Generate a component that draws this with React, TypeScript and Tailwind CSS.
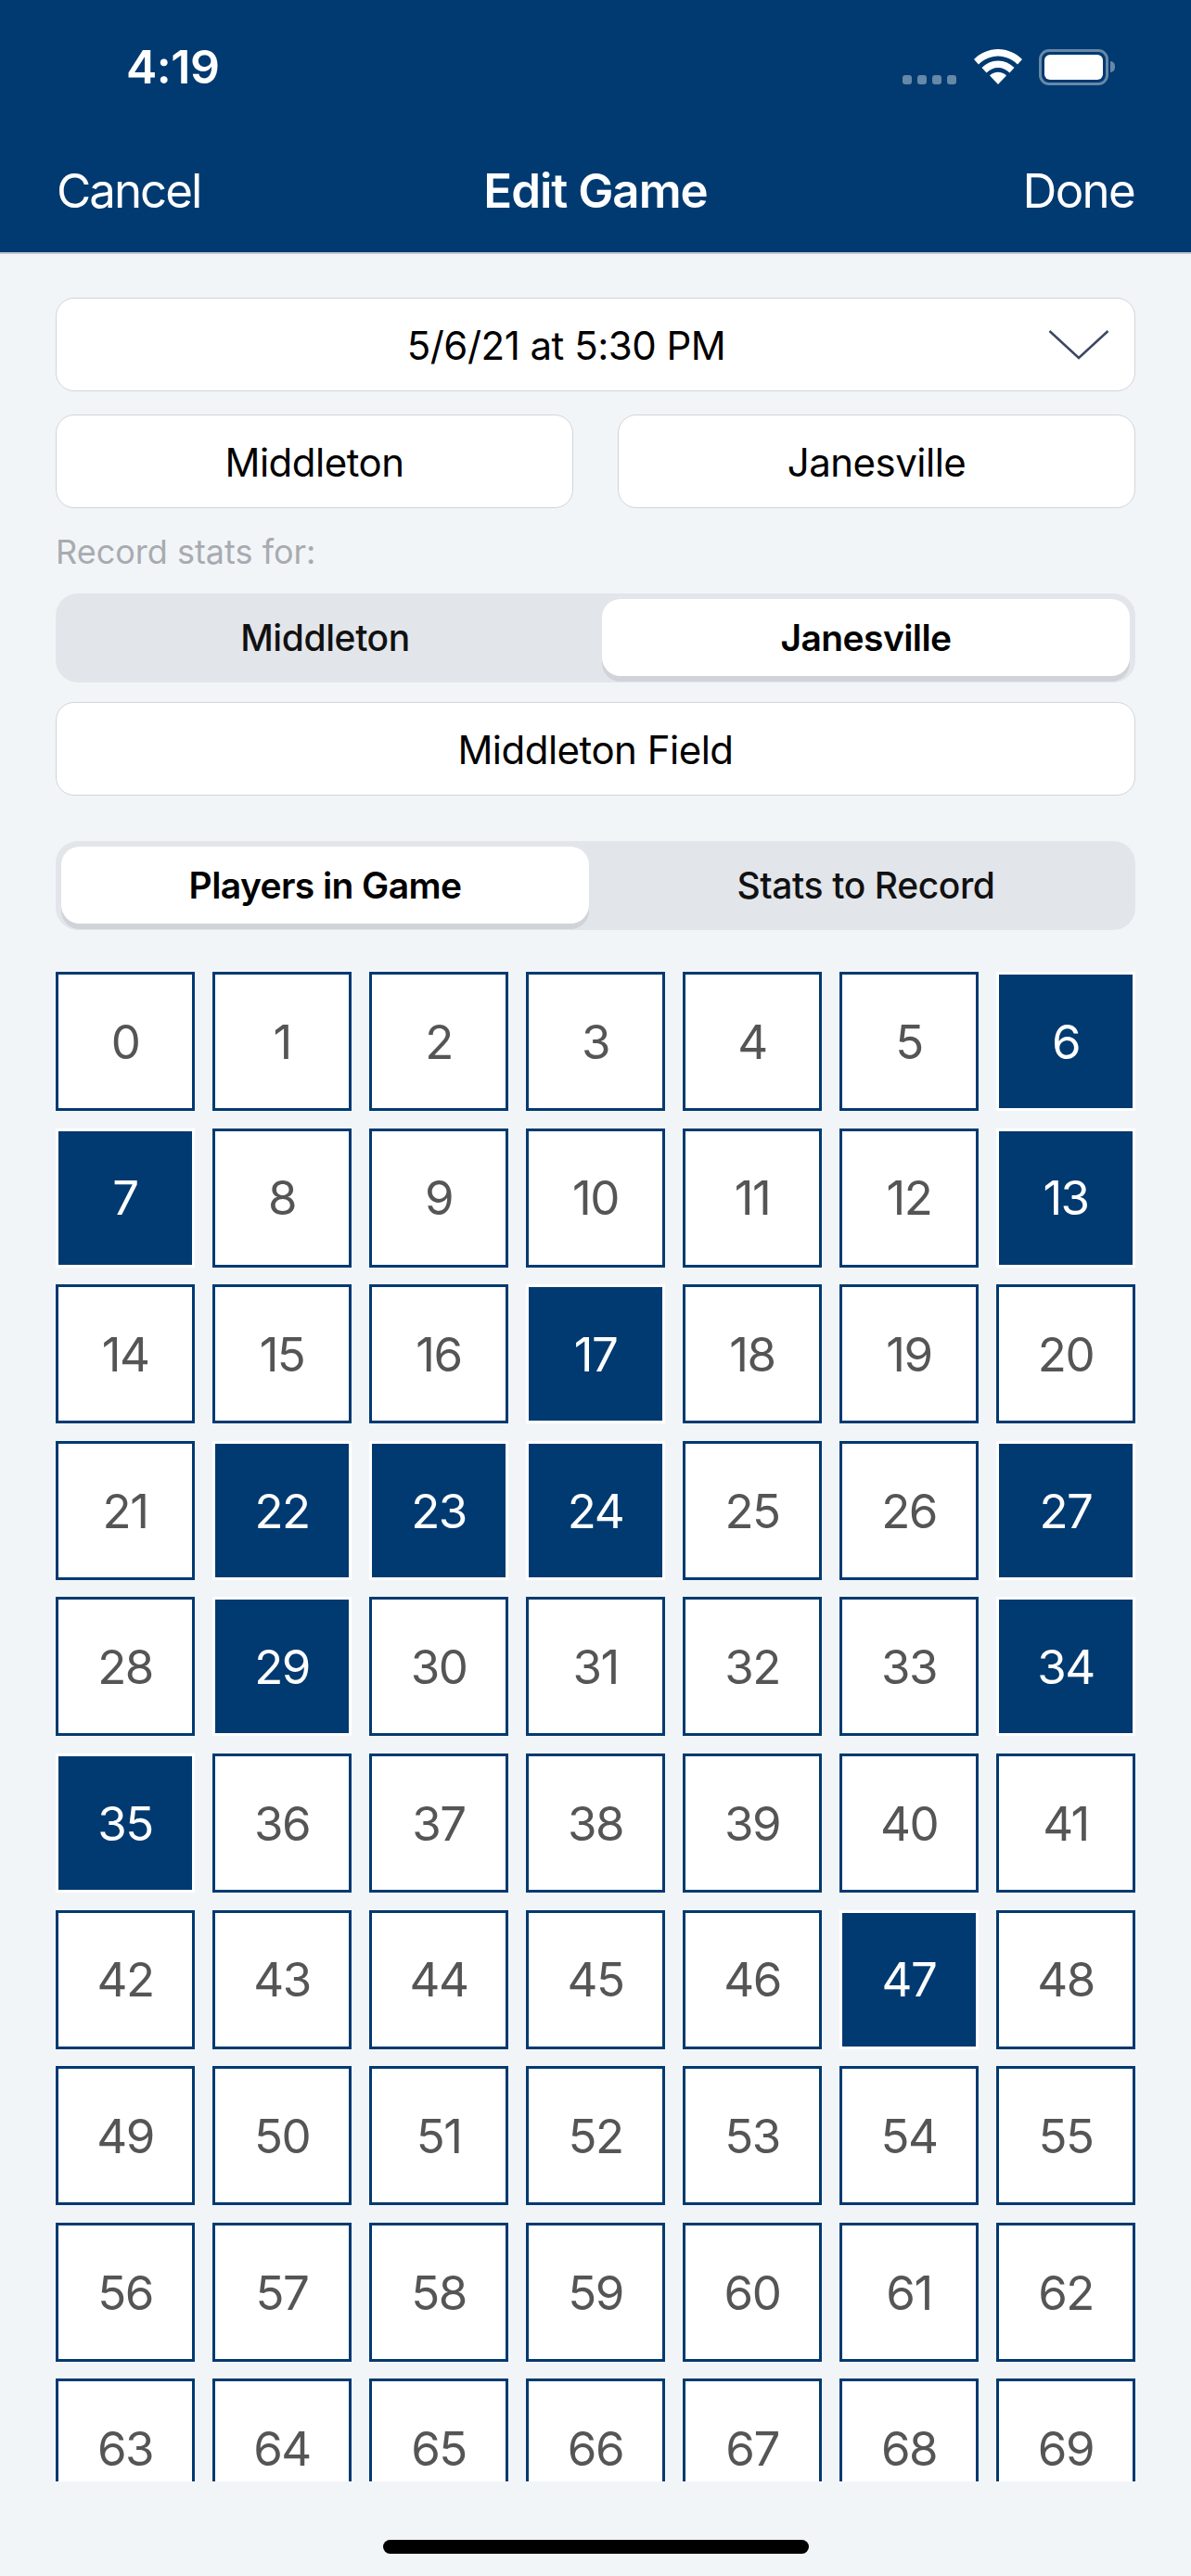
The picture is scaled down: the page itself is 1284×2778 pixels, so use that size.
const navy = "bg-[#003a70]";
const selected = [6, 7, 13, 17, 22, 23, 24, 27, 29, 34, 35, 47];
const numbers = Array.from({ length: 70 }, (_, i) => i);

function StatusIcons() {
  return (
    <div className="flex items-center">
      <div className="mt-[27px] flex gap-[6px]">
        {[0, 1, 2, 3].map((d) => (
          <div key={d} className="h-[10px] w-[10px] rounded-[3px] bg-white/40" />
        ))}
      </div>
      <svg className="ml-[19px]" width="52" height="38" viewBox="0 0 52 38">
        <path d="M26 38 L17 28.5 C22 23.5 30 23.5 35 28.5 Z" fill="#fff" />
        <path d="M26 12.5 C33 12.5 39 15.5 43.5 20 L38.5 25.5 C35 22 30.5 20 26 20 C21.500 20 17 22 13.500 25.500 L8.500 20 C13 15.500 19 12.500 26 12.500 Z" fill="#fff" />
        <path d="M26 0 C36 0 45 4 52 11 L47 16.500 C41.500 11 34 7.500 26 7.500 C18 7.500 10.500 11 5 16.500 L0 11 C7 4 16 0 26 0 Z" fill="#fff" />
      </svg>
      <div className="ml-[18px] flex items-center">
        <div className="flex h-[39px] w-[75px] rounded-[11px] border-[3px] border-white/40 p-[3px]">
          <div className="flex-1 rounded-[6px] bg-white" />
        </div>
        <div className="ml-[2px] h-[12px] w-[5px] rounded-r-full bg-white/40" />
      </div>
    </div>
  );
}

function BoxField({ label, className = "" }: { label: string; className?: string }) {
  return (
    <div className={`flex h-[101px] items-center justify-center rounded-[20px] border border-[#d2d4d8] bg-white pt-[2px] text-[42px] tracking-[-0.5px] text-black ${className}`}>
      {label}
    </div>
  );
}

function Segmented({ left, right, active }: { left: string; right: string; active: "left" | "right" }) {
  const on = "w-[569px] h-full flex items-center justify-center rounded-[20px] bg-white pt-[2px] font-semibold text-black tracking-[-0.6px] shadow-[0_6px_0_rgba(0,0,0,0.08)]";
  const off = "w-[569px] h-full flex items-center justify-center pt-[2px] font-medium text-[#111] tracking-[-0.4px]";
  return (
    <div className="flex h-[96px] justify-between rounded-[24px] bg-[#e2e5ea] px-[6px] py-[6px] pb-[7px] text-[39px]">
      <div className={active === "left" ? on : off}>{left}</div>
      <div className={active === "right" ? on : off}>{right}</div>
    </div>
  );
}

export default function App() {
  return (
    <div className="relative h-[2778px] w-[1284px] overflow-hidden bg-[#f2f5f8] font-['Inter',sans-serif]">
      <header className={`flex h-[274px] flex-col border-b-2 border-[#c4c9d0] px-[61px] text-white ${navy}`}>
        <div className="flex h-[144px] items-center justify-between pr-[21px]">
          <div className="ml-[75px] text-[50px] font-semibold tracking-[-0.5px]">4:19</div>
          <StatusIcons />
        </div>
        <div className="grid grid-cols-3 items-start pt-[30px] text-[51px] leading-[64px]">
          <span className="tracking-[-2px]">Cancel</span>
          <span className="text-center font-semibold tracking-[-1px]">Edit Game</span>
          <span className="text-right tracking-[-1.7px]">Done</span>
        </div>
      </header>

      <main className="px-[60px]">
        <div className="relative mt-[47px]">
          <BoxField label="5/6/21 at 5:30 PM" className="pr-[63px]" />
          <svg className="absolute right-[28px] top-[34px]" width="66" height="34" viewBox="0 0 66 34" fill="none">
            <path d="M1.500 2 L33 31 L64.500 2" stroke="#3d4763" strokeWidth="2.500" />
          </svg>
        </div>
        <div className="mt-[25px] grid grid-cols-2 gap-[48px]">
          <BoxField label="Middleton" />
          <BoxField label="Janesville" />
        </div>
        <div className="mt-[25px] flex h-[44px] items-center text-[36px] text-[#a8abb0]">Record stats for:</div>
        <div className="mt-[23px]">
          <Segmented left="Middleton" right="Janesville" active="right" />
        </div>
        <BoxField label="Middleton Field" className="mt-[21px]" />
        <div className="mt-[49px]">
          <Segmented left="Players in Game" right="Stats to Record" active="left" />
        </div>

        {/* scroll area, last row is cut off */}
        <div className="mt-[45px] h-[1628px] overflow-hidden">
          <div className="grid grid-cols-[repeat(7,150px)] gap-x-[19px] gap-y-[18.6px]">
            {numbers.map((n) => {
              const isOn = selected.includes(n);
              return (
                <div
                  key={n}
                  className={
                    isOn
                      ? `flex h-[150px] items-center justify-center border-[3px] border-white pt-[2px] text-[51px] tracking-[-1.5px] text-white ${navy}`
                      : "flex h-[150px] items-center justify-center border-[3px] border-[#003a70] bg-white pt-[2px] text-[51px] tracking-[-1.5px] text-[#555]"
                  }
                >
                  {n}
                </div>
              );
            })}
          </div>
        </div>
      </main>

      <div className="absolute bottom-[24px] left-[413px] h-[15px] w-[459px] rounded-full bg-black" />
    </div>
  );
}
